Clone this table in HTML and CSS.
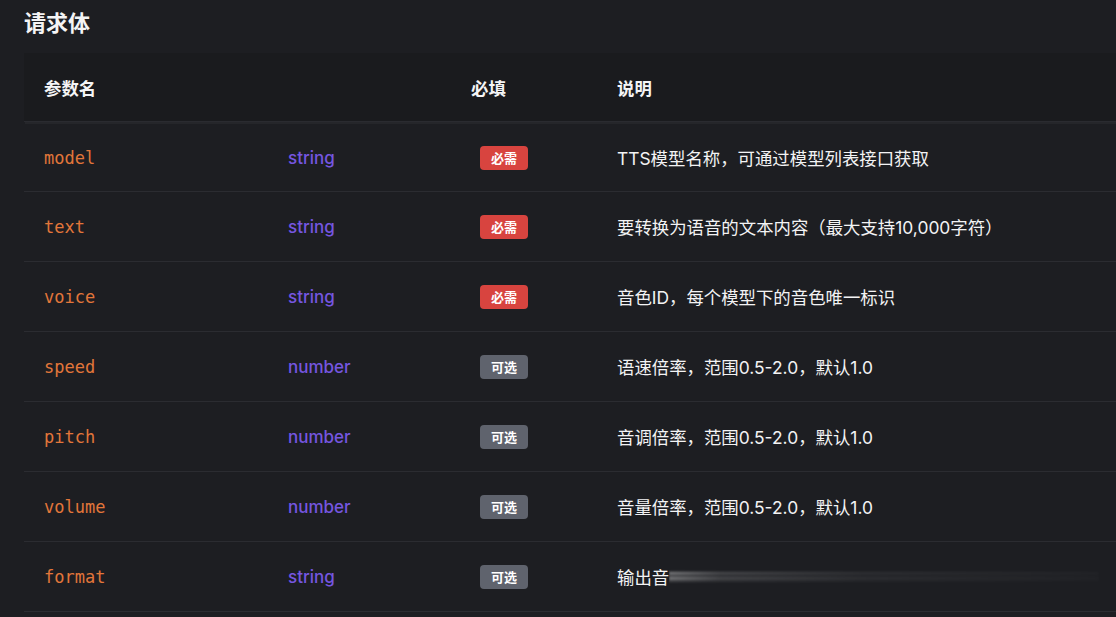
FILE: index.html
```html
<!DOCTYPE html>
<html lang="zh">
<head>
<meta charset="utf-8">
<title>请求体</title>
<link rel="stylesheet" href="styles.css">
</head>
<body>
<div class="page">
  <h2 class="title">请求体</h2>
  <div class="table">
    <div class="row head">
      <div class="cell">参数名</div>
      <div class="cell"></div>
      <div class="cell">必填</div>
      <div class="cell">说明</div>
    </div>
    <div class="row">
      <div class="cell name">model</div>
      <div class="cell type">string</div>
      <div class="cell req"><span class="badge must">必需</span></div>
      <div class="cell desc">TTS模型名称，可通过模型列表接口获取</div>
    </div>
    <div class="row">
      <div class="cell name">text</div>
      <div class="cell type">string</div>
      <div class="cell req"><span class="badge must">必需</span></div>
      <div class="cell desc">要转换为语音的文本内容（最大支持10,000字符）</div>
    </div>
    <div class="row">
      <div class="cell name">voice</div>
      <div class="cell type">string</div>
      <div class="cell req"><span class="badge must">必需</span></div>
      <div class="cell desc">音色ID，每个模型下的音色唯一标识</div>
    </div>
    <div class="row">
      <div class="cell name">speed</div>
      <div class="cell type">number</div>
      <div class="cell req"><span class="badge opt">可选</span></div>
      <div class="cell desc">语速倍率，范围0.5-2.0，默认1.0</div>
    </div>
    <div class="row">
      <div class="cell name">pitch</div>
      <div class="cell type">number</div>
      <div class="cell req"><span class="badge opt">可选</span></div>
      <div class="cell desc">音调倍率，范围0.5-2.0，默认1.0</div>
    </div>
    <div class="row">
      <div class="cell name">volume</div>
      <div class="cell type">number</div>
      <div class="cell req"><span class="badge opt">可选</span></div>
      <div class="cell desc">音量倍率，范围0.5-2.0，默认1.0</div>
    </div>
    <div class="row">
      <div class="cell name">format</div>
      <div class="cell type">string</div>
      <div class="cell req"><span class="badge opt">可选</span></div>
      <div class="cell desc">输出音<span class="smear" aria-hidden="true"></span></div>
    </div>
  </div>
</div>
</body>
</html>
```

FILE: styles.css
```css
html, body {
  margin: 0;
  padding: 0;
  background: #1d1e22;
  overflow: hidden;
}

.page {
  padding: 6px 0 0 24px;
  font-family: "Inter", "Noto Sans CJK SC", sans-serif;
  color: #f2f2f3;
}

.title {
  margin: 0;
  font-size: 22px;
  line-height: 30px;
  font-weight: 700;
  color: #f4f4f5;
  font-family: "Noto Sans CJK SC", sans-serif;
}

.table {
  margin-top: 17px;
  width: 1120px;
}

.row {
  display: grid;
  grid-template-columns: 244px 183px 146px 1fr;
  height: 70px;
  align-items: center;
  border-bottom: 1px solid #2b2c31;
  box-sizing: border-box;
}

.row.head {
  background: #1a1b1e;
  height: 69px;
  border-bottom: 1px solid #2a2b30;
  box-shadow: 0 3px 0 -1px #25262a;
  margin-bottom: 2px;
  font-family: "Noto Sans CJK SC", sans-serif;
  font-weight: 700;
  font-size: 17.4px;
  color: #f5f5f6;
}

.row.head + .row {
  height: 68px;
}

.cell {
  padding-left: 20px;
  white-space: nowrap;
}

.name {
  font-family: "DejaVu Sans Mono", monospace;
  font-size: 17px;
  color: #e2763a;
}

.type {
  font-family: "Inter", sans-serif;
  font-size: 17px;
  font-weight: 500;
  color: #7656e0;
}

.req {
  padding-left: 29px;
  display: flex;
}

.badge {
  display: inline-flex;
  align-items: center;
  justify-content: center;
  width: 48px;
  height: 24px;
  border-radius: 4px;
  font-family: "Noto Sans CJK SC", sans-serif;
  font-size: 13px;
  font-weight: 700;
  color: #ffffff;
}

.badge.must {
  background: #d8443f;
}

.badge.opt {
  background: #5f636d;
}

.desc {
  font-family: "Inter", "Noto Sans CJK SC", sans-serif;
  font-size: 17.4px;
  color: #f3f3f4;
  display: flex;
  align-items: center;
}

.smear {
  display: inline-block;
  width: 430px;
  height: 16px;
  background:
    linear-gradient(to bottom,
      transparent 0px, transparent 2px,
      rgba(255,255,255,0.5) 4px, rgba(255,255,255,0.2) 6px,
      rgba(255,255,255,0.15) 7px, rgba(255,255,255,0.45) 9px,
      rgba(255,255,255,0.25) 11px, transparent 14px);
  -webkit-mask-image: linear-gradient(to right, #000 0%, rgba(0,0,0,0.45) 12%, rgba(0,0,0,0.18) 45%, rgba(0,0,0,0.05) 100%);
  mask-image: linear-gradient(to right, #000 0%, rgba(0,0,0,0.45) 12%, rgba(0,0,0,0.18) 45%, rgba(0,0,0,0.05) 100%);
  filter: blur(1px);
}
```
